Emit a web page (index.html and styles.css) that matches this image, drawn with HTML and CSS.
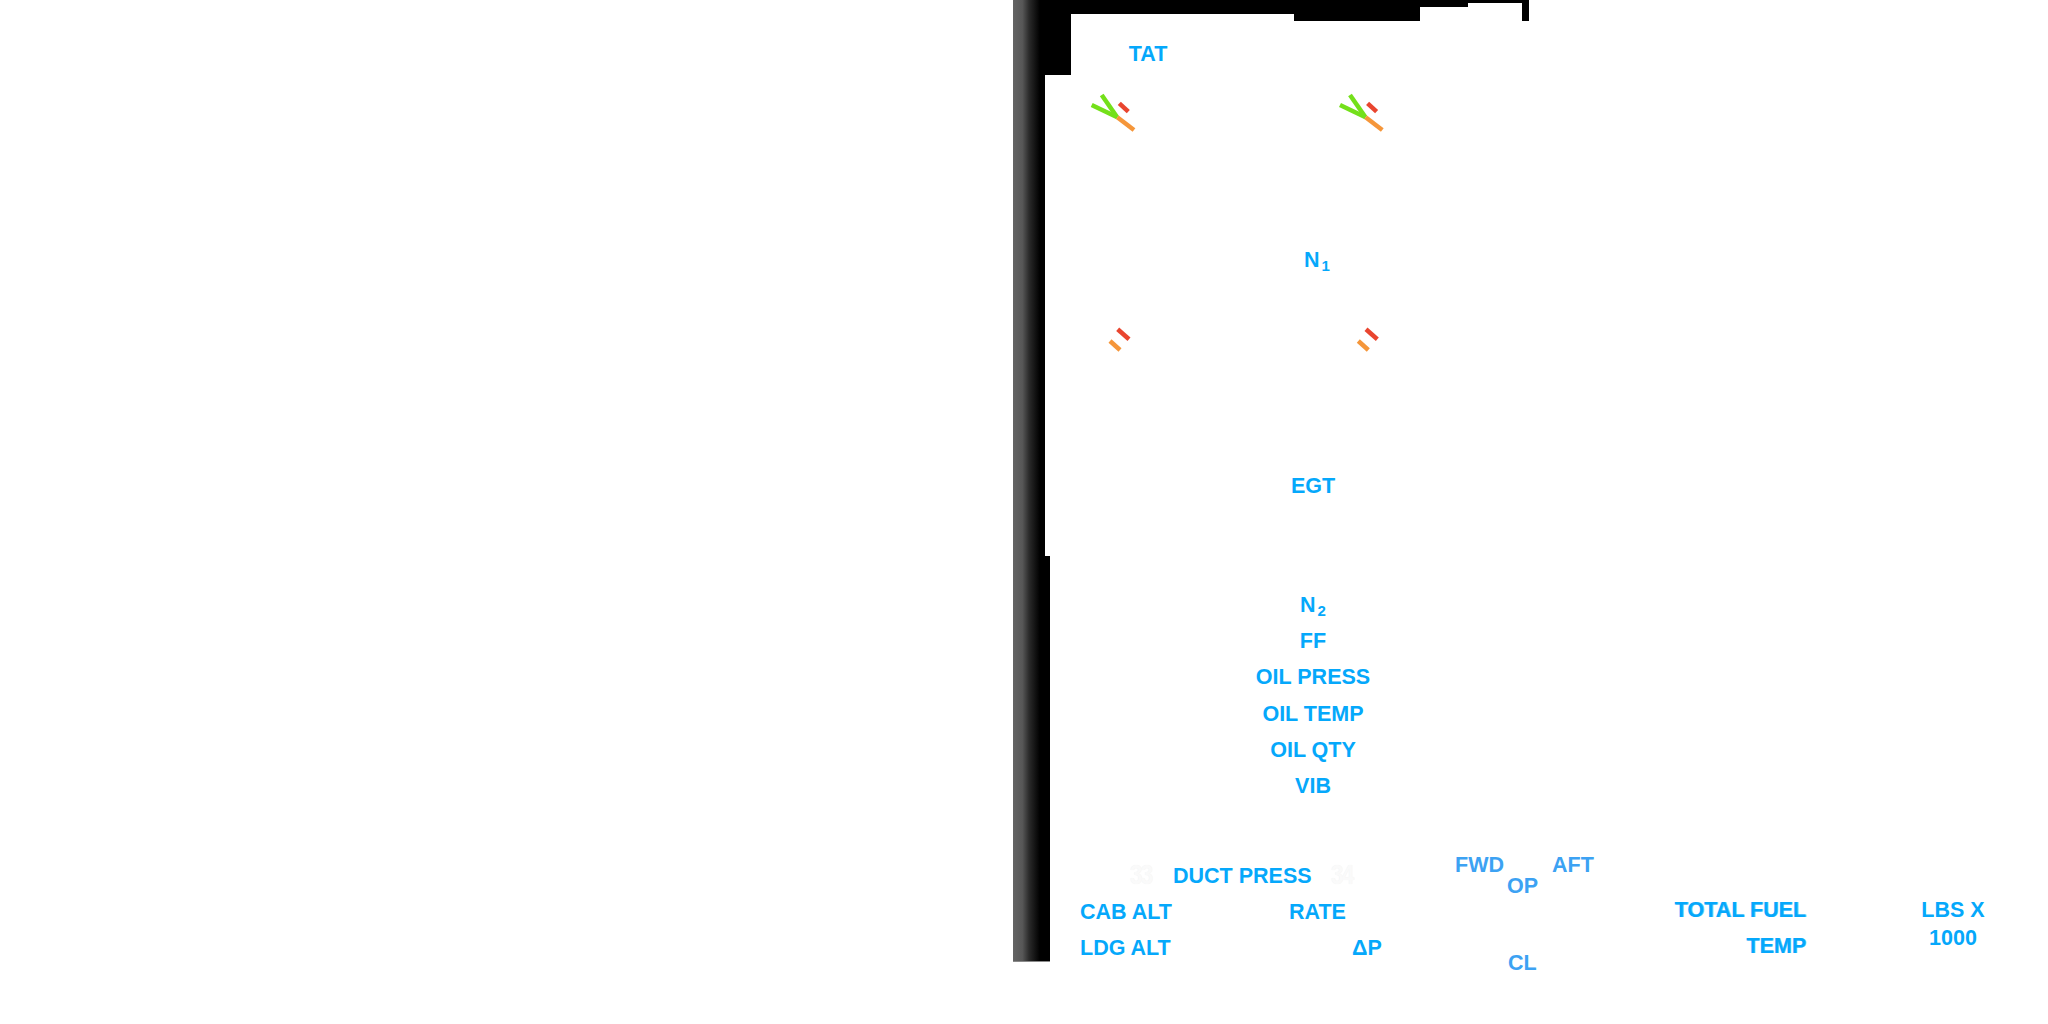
FILE: index.html
```html
<!DOCTYPE html>
<html>
<head>
<meta charset="utf-8">
<link rel="stylesheet" href="styles.css">
</head>
<body>
<div class="canvas">
  <svg class="bezel" width="2048" height="1024" viewBox="0 0 2048 1024">
    <defs>
      <linearGradient id="edge" x1="0" y1="0" x2="1" y2="0">
        <stop offset="0" stop-color="#646464"/>
        <stop offset="0.35" stop-color="#575757"/>
        <stop offset="0.6" stop-color="#2a2a2a"/>
        <stop offset="1" stop-color="#000"/>
      </linearGradient>
    </defs>
    <path d="M1013 0 H1529 V21 H1522 V3 H1468 V7 H1420 V21 H1294 V14 H1071 V75 H1045 V556 H1050 V962 H1013 Z" fill="#000"/>
    <rect x="1013" y="0" width="27" height="962" fill="url(#edge)"/>
    <rect x="1013" y="961" width="37" height="1" fill="#8a8a8a"/>
    <g class="needle" stroke-width="4.5" stroke-linecap="butt">
      <line x1="1091.7" y1="105" x2="1117.3" y2="117.3" stroke="#74e01a"/>
      <line x1="1101.7" y1="95" x2="1117" y2="117" stroke="#74e01a"/>
      <line x1="1117.3" y1="117.3" x2="1134" y2="130" stroke="#f5963a"/>
      <line x1="1119.3" y1="103.3" x2="1128.3" y2="111.7" stroke="#e9452f"/>
      <line x1="1340" y1="105" x2="1365.6" y2="117.3" stroke="#74e01a"/>
      <line x1="1350" y1="95" x2="1365.3" y2="117" stroke="#74e01a"/>
      <line x1="1365.6" y1="117.3" x2="1382.3" y2="130" stroke="#f5963a"/>
      <line x1="1367.6" y1="103.3" x2="1376.6" y2="111.7" stroke="#e9452f"/>
      <line x1="1117.7" y1="329.3" x2="1129" y2="339.3" stroke="#e9452f"/>
      <line x1="1110" y1="341" x2="1120" y2="350" stroke="#f5963a"/>
      <line x1="1366" y1="329.3" x2="1377.3" y2="339.3" stroke="#e9452f"/>
      <line x1="1358.3" y1="341" x2="1368.3" y2="350" stroke="#f5963a"/>
    </g>
  </svg>

  <div class="lbl c" style="left:1148px;top:43.5px">TAT</div>
  <div class="lbl c" style="left:1317px;top:250px">N<span class="sub">1</span></div>
  <div class="lbl c" style="left:1313px;top:475.5px">EGT</div>

  <div class="engine-stack">
    <div>N<span class="sub">2</span></div>
    <div>FF</div>
    <div>OIL PRESS</div>
    <div>OIL TEMP</div>
    <div>OIL QTY</div>
    <div>VIB</div>
  </div>

  <div class="ghost" style="left:1130px;top:861px">33</div>
  <div class="lbl" style="left:1173px;top:866px">DUCT PRESS</div>
  <div class="ghost" style="left:1331px;top:861px">34</div>

  <div class="lbl valve" style="left:1455px;top:855px">FWD</div>
  <div class="lbl valve" style="left:1507px;top:876px">OP</div>
  <div class="lbl valve" style="left:1552px;top:855px">AFT</div>
  <div class="lbl valve" style="left:1508px;top:953px">CL</div>

  <div class="lbl" style="left:1080px;top:901.5px">CAB ALT</div>
  <div class="lbl" style="left:1289px;top:901.5px">RATE</div>
  <div class="lbl" style="left:1080px;top:937.5px">LDG ALT</div>
  <div class="lbl" style="left:1352px;top:937.5px">ΔP</div>

  <div class="fuel">
    <div>TOTAL FUEL</div>
    <div>TEMP</div>
  </div>
  <div class="units">
    <div>LBS X</div>
    <div>1000</div>
  </div>
</div>
</body>
</html>
```
FILE: styles.css
```css
html, body {
  margin: 0;
  padding: 0;
  background: #ffffff;
}
.canvas {
  position: relative;
  width: 2048px;
  height: 1024px;
  overflow: hidden;
  background: #ffffff;
  font-family: "Liberation Sans", Arial, sans-serif;
  font-weight: bold;
  font-size: 21.5px;
  color: #05a8fb;
}
.bezel {
  position: absolute;
  left: 0;
  top: 0;
}
.lbl {
  position: absolute;
  line-height: 1;
  white-space: nowrap;
}
.lbl.c {
  transform: translateX(-50%);
}
.sub {
  font-size: 15px;
  line-height: 0;
  vertical-align: -4px;
  margin-left: 2px;
}
.valve {
  color: #3ca2f3;
}
.engine-stack {
  position: absolute;
  left: 1313px;
  top: 587px;
  transform: translateX(-50%);
  display: flex;
  flex-direction: column;
  align-items: center;
  line-height: 36.2px;
  white-space: nowrap;
}
.ghost {
  position: absolute;
  line-height: 1;
  font-size: 28px;
  letter-spacing: -2px;
  transform: scaleX(0.8);
  transform-origin: left top;
  color: #fafafa;
  text-shadow: 0 0 1px #f0f0f0;
}
.fuel {
  position: absolute;
  right: 242px;
  top: 892px;
  display: flex;
  flex-direction: column;
  align-items: flex-end;
  line-height: 36px;
  white-space: nowrap;
  text-shadow: 0.8px 0 0.6px rgba(5, 168, 251, 0.6);
}
.units {
  position: absolute;
  left: 1953px;
  top: 899.5px;
  transform: translateX(-50%);
  display: flex;
  flex-direction: column;
  align-items: center;
  line-height: 26px;
  white-space: nowrap;
}
.units div:first-child {
  line-height: 1;
  margin-bottom: 4px;
}
```
